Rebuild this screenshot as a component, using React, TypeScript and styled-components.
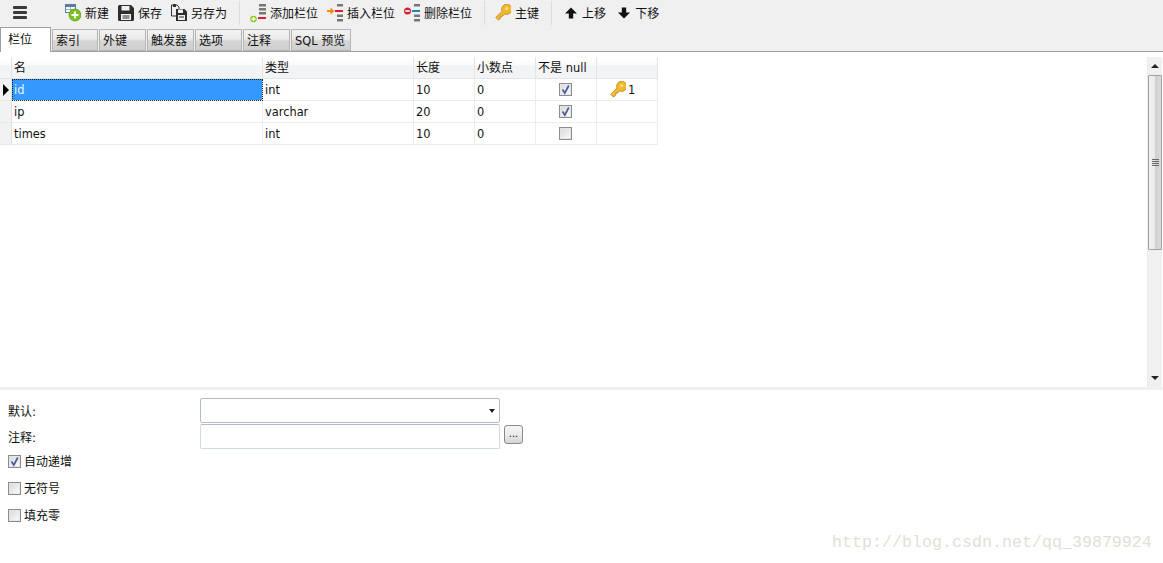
import React from "react";
import styled, { createGlobalStyle } from "styled-components";

const Global = createGlobalStyle`
  html, body { margin: 0; padding: 0; background: #fff; }
  body { font-family: "DejaVu Sans", "Noto Sans CJK SC", sans-serif; font-size: 12px; color: #111; }
`;

const Page = styled.div`
  position: relative;
  width: 1163px;
  height: 563px;
  overflow: hidden;
  display: flex;
  flex-direction: column;
  background: #fff;
`;

const Toolbar = styled.div`
  box-sizing: border-box;
  height: 27px;
  display: flex;
  align-items: center;
  padding: 0 0 2px 13px;
  background: #f0f0f0;
`;

const MenuButton = styled.div`
  width: 14px;
  display: flex;
  flex-direction: column;
  gap: 2px;
  margin-right: 38px;
  span { height: 3px; background: #3a3a3a; border-radius: 1px; }
`;

const ToolButton = styled.div<{ $gap?: number; $after?: number; $before?: number }>`
  display: flex;
  align-items: center;
  gap: ${(p) => p.$gap ?? 4}px;
  margin-left: ${(p) => p.$before ?? 0}px;
  margin-right: ${(p) => p.$after ?? 9}px;
  white-space: nowrap;
  svg { display: block; flex: none; }
`;

const Separator = styled.div`
  width: 1px;
  height: 24px;
  background: #dcdcdc;
  margin-right: 10px;
`;

const TabBar = styled.div`
  height: 25px;
  display: flex;
  align-items: flex-end;
  background: #f0f0f0;
  border-bottom: 1px solid #a0a0a0;
  box-sizing: border-box;
`;

const Tab = styled.div<{ $active?: boolean; $width: number }>`
  box-sizing: border-box;
  width: ${(p) => p.$width}px;
  height: ${(p) => (p.$active ? 25 : 22)}px;
  margin-right: 1px;
  margin-bottom: ${(p) => (p.$active ? -1 : 0)}px;
  padding: ${(p) => (p.$active ? "4px 0 0 7px" : "3px 0 0 3px")};
  border: 1px solid ${(p) => (p.$active ? "#a0a0a0" : "#b4b4b4")};
  border-bottom: ${(p) => (p.$active ? "none" : "1px solid #b4b4b4")};
  background: ${(p) => (p.$active ? "#fff" : "linear-gradient(#f2f2f2 0%, #ebebeb 45%, #d6d6d6 55%, #cfcfcf 100%)")};
  line-height: 16px;
  white-space: nowrap;
  position: relative;
  z-index: ${(p) => (p.$active ? 1 : 0)};
`;

const Latin = styled.span`
  font-size: 11.4px;
`;

const GridArea = styled.div`
  height: 335px;
  display: flex;
  padding-top: 5px;
  box-sizing: border-box;
`;

const TableWrap = styled.div`
  flex: 1;
`;

const Table = styled.div`
  display: grid;
  grid-template-columns: 12px 251px 151px 61px 61px 61px 61px;
  grid-auto-rows: 22px;
  width: 658px;
`;

const HeaderCell = styled.div`
  box-sizing: border-box;
  padding: 2px 0 0 2px;
  line-height: 18px;
  border-right: 1px solid #e4e4e4;
  border-bottom: 1px solid #e4e4e4;
  background: linear-gradient(#fff 0%, #fbfbfb 35%, #f1f3f4 45%, #f3f4f5 100%);
  white-space: nowrap;
`;

const RowHeader = styled.div`
  box-sizing: border-box;
  display: flex;
  align-items: center;
  padding-left: 3px;
  border-right: 1px solid #dedede;
  border-bottom: 1px solid #e8e8e8;
  background: #f2f2f2;
`;

const Pointer = styled.div`
  width: 0;
  height: 0;
  border-left: 6px solid #000;
  border-top: 6px solid transparent;
  border-bottom: 6px solid transparent;
`;

const Cell = styled.div<{ $center?: boolean; $selected?: boolean }>`
  box-sizing: border-box;
  display: flex;
  align-items: center;
  justify-content: ${(p) => (p.$center ? "center" : "flex-start")};
  padding: ${(p) => (p.$center ? "0 1px 0 0" : "0 0 0 2px")};
  gap: 2px;
  border-right: 1px solid #ececec;
  border-bottom: 1px solid #ececec;
  background: #fff;
  font-size: 11.4px;
  ${(p) =>
    p.$selected &&
    `background: #3399ff; color: #eaf4ff; outline: 1px dotted #222; outline-offset: -1px; border-color: #d8e6f2;`}
`;

const KeyCell = styled(Cell)`
  padding-left: 13px;
  gap: 2px;
`;

const CheckBox = styled.div`
  box-sizing: border-box;
  flex: none;
  width: 13px;
  height: 13px;
  border: 1px solid #8c8c8c;
  background: linear-gradient(135deg, #d8d8d8 0%, #eeeeee 60%, #fff 100%);
  box-shadow: inset 0 0 0 1px #e6e6e6;
  display: flex;
  align-items: center;
  justify-content: center;
  svg { display: block; }
`;

const ScrollBar = styled.div`
  box-sizing: border-box;
  width: 16px;
  display: flex;
  flex-direction: column;
  background: #f0f0f0;
  border-left: 1px solid #ebebeb;
  border-right: 1px solid #fff;
`;

const ScrollArrow = styled.div`
  height: 18px;
  display: flex;
  align-items: center;
  justify-content: center;
  flex: none;
`;

const ArrowUp = styled.div`
  border-left: 4px solid transparent;
  border-right: 4px solid transparent;
  border-bottom: 4px solid #222;
`;

const ArrowDown = styled.div<{ $size?: number }>`
  border-left: ${(p) => p.$size ?? 4}px solid transparent;
  border-right: ${(p) => p.$size ?? 4}px solid transparent;
  border-top: 4px solid #222;
`;

const Thumb = styled.div`
  box-sizing: border-box;
  height: 175px;
  flex: none;
  border: 1px solid #a2a2a2;
  border-radius: 1px;
  background: linear-gradient(90deg, #f0f0f0 0%, #ececec 45%, #cfcfcf 55%, #dcdcdc 100%);
  display: flex;
  flex-direction: column;
  justify-content: center;
  align-items: center;
  gap: 1px;
  span { width: 7px; height: 1px; background: #666; }
`;

const Track = styled.div`
  flex: 1;
`;

const Divider = styled.div`
  height: 3px;
  background: #f0f0f0;
  flex: none;
`;

const Form = styled.div`
  padding: 8px 0 0 8px;
  display: grid;
  grid-template-columns: 192px 300px 24px;
  grid-template-rows: 26px 25px;
`;

const FieldLabel = styled.div`
  height: 25px;
  display: flex;
  align-items: center;
`;

const SelectBox = styled.div`
  box-sizing: border-box;
  height: 25px;
  border: 1px solid #b6bcc4;
  border-radius: 2px;
  display: flex;
  align-items: center;
  justify-content: flex-end;
  padding-right: 4px;
`;

const InputBox = styled.div`
  box-sizing: border-box;
  height: 25px;
  border: 1px solid #d3dae4;
  border-top-color: #b6bcc4;
  border-radius: 2px;
`;

const DotsButton = styled.div`
  box-sizing: border-box;
  width: 19px;
  height: 19px;
  margin: 1px 0 0 4px;
  border: 1px solid #8a8a8a;
  border-radius: 3px;
  background: linear-gradient(#f4f4f4 0%, #ececec 50%, #d4d4d4 100%);
  font-size: 10px;
  line-height: 16px;
  text-align: center;
`;

const Options = styled.div`
  padding: 6px 0 0 8px;
  display: flex;
  flex-direction: column;
`;

const OptionRow = styled.div`
  height: 27px;
  display: flex;
  align-items: flex-start;
  gap: 3px;
  line-height: 15px;
`;

const Watermark = styled.div`
  position: absolute;
  left: 832px;
  top: 533px;
  font-family: "Liberation Mono", monospace;
  font-size: 16.67px;
  line-height: 20px;
  color: #dfdfd8;
  white-space: nowrap;
`;

const Key = () => (
  <svg width="16" height="17" viewBox="0 0 16 17">
    <path d="M3.600 16.200L0.800 13.400 7 7.200A5.100 5.100 0 1 1 9.800 10L8.400 11.400 7.200 11.300 7.100 12.500 5.700 12.600 5.600 14.200z" fill="#f3b92c" stroke="#b5851c" strokeWidth="0.8" strokeLinejoin="round" />
    <circle cx="11.600" cy="4.400" r="1.500" fill="#fde38a" />
  </svg>
);

const NewIcon = () => (
  <svg width="16" height="18" viewBox="0 0 16 18">
    <rect x="0.500" y="0.500" width="10" height="8" fill="#fff" stroke="#5a7aa8" />
    <rect x="1" y="1" width="9" height="2" fill="#5a7aa8" />
    <path d="M5.500 3v5M1 5.500h9" stroke="#99aabb" strokeWidth="1" />
    <circle cx="10" cy="11" r="6" fill="#7cc21e" stroke="#5c9e10" strokeWidth="0.8" />
    <path d="M10 7.500v7M6.500 11h7" stroke="#fff" strokeWidth="2" />
  </svg>
);

const SaveIcon = () => (
  <svg width="16" height="16" viewBox="0 0 16 16">
    <path d="M0 1.500A1.500 1.500 0 0 1 1.500 0H13l3 3v11.500a1.500 1.500 0 0 1-1.500 1.500h-13A1.500 1.500 0 0 1 0 14.500z" fill="#2e2e2e" />
    <rect x="3.500" y="1" width="8" height="4.500" fill="#f0f0f0" />
    <rect x="3" y="9" width="10" height="6" fill="#f0f0f0" />
    <rect x="4.500" y="10.500" width="7" height="1" fill="#2e2e2e" />
    <rect x="4.500" y="12.500" width="7" height="1" fill="#2e2e2e" />
  </svg>
);

const SaveAsIcon = () => (
  <svg width="16" height="17" viewBox="0 0 16 17">
    <path d="M0.500 1h5.500l2 2v9H0.500z" fill="#f0f0f0" stroke="#333" />
    <rect x="2" y="0" width="3" height="3" fill="#333" />
    <path d="M5 5h8.500L16 7.500V17H5z" fill="#2e2e2e" />
    <rect x="7" y="5.500" width="5" height="3.500" fill="#f0f0f0" />
    <rect x="7" y="11" width="7" height="5" fill="#f0f0f0" />
    <rect x="8" y="12.500" width="5" height="1" fill="#2e2e2e" />
  </svg>
);

const AddColumnIcon = () => (
  <svg width="16" height="20" viewBox="0 0 16 20">
    <rect x="9" y="1" width="7" height="2.500" fill="#777" />
    <rect x="9" y="5" width="7" height="2.500" fill="#777" />
    <rect x="9" y="9" width="7" height="2.500" fill="#777" />
    <rect x="8" y="14" width="8" height="2" fill="#e0183c" />
    <circle cx="3.500" cy="16" r="3.300" fill="#8ccc24" />
    <path d="M3.500 14v4M1.500 16h4" stroke="#fff" strokeWidth="1.300" />
  </svg>
);

const InsertColumnIcon = () => (
  <svg width="16" height="18" viewBox="0 0 16 18">
    <rect x="10" y="0" width="6" height="2.500" fill="#777" />
    <rect x="8" y="6" width="8" height="2" fill="#e0183c" />
    <rect x="10" y="10.500" width="6" height="2.500" fill="#777" />
    <rect x="10" y="15" width="6" height="2.500" fill="#777" />
    <path d="M0 6h3.500V3.500L7.500 7l-4 3.500V8H0z" fill="#f58a10" />
  </svg>
);

const DeleteColumnIcon = () => (
  <svg width="16" height="18" viewBox="0 0 16 18">
    <rect x="10" y="0" width="6" height="2.500" fill="#777" />
    <rect x="8" y="6" width="8" height="2" fill="#1f86b0" />
    <rect x="10" y="10.500" width="6" height="2.500" fill="#777" />
    <rect x="10" y="15" width="6" height="2.500" fill="#777" />
    <circle cx="3.500" cy="7" r="3.500" fill="#d8203a" />
    <rect x="1.300" y="6.200" width="4.400" height="1.600" fill="#fff" />
  </svg>
);

const UpIcon = () => (
  <svg width="12" height="12" viewBox="0 0 12 12">
    <path d="M6 0.500L12 6.500H8.200V11.500H3.800V6.500H0z" fill="#111" />
  </svg>
);

const DownIcon = () => (
  <svg width="12" height="12" viewBox="0 0 12 12">
    <path d="M6 11.500L12 5.500H8.200V0.500H3.800V5.500H0z" fill="#111" />
  </svg>
);

const Tick = () => (
  <svg width="11" height="11" viewBox="0 0 11 11">
    <path d="M2.500 5.500L4.800 9 8.800 1.500" fill="none" stroke="#4a5c9c" strokeWidth="1.700" />
  </svg>
);

const Check = ({ on }: { on?: boolean }) => <CheckBox>{on && <Tick />}</CheckBox>;

const tabs: [React.ReactNode, number][] = [
  ["索引", 46],
  ["外键", 47],
  ["触发器", 47],
  ["选项", 47],
  ["注释", 47],
  [<><Latin>SQL</Latin> 预览</>, 60],
];

const columns: React.ReactNode[] = ["名", "类型", "长度", "小数点", <>不是 <Latin>null</Latin></>, ""];

const rows = [
  { name: "id", type: "int", len: "10", dec: "0", notNull: true, key: true },
  { name: "ip", type: "varchar", len: "20", dec: "0", notNull: true, key: false },
  { name: "times", type: "int", len: "10", dec: "0", notNull: false, key: false },
];

export default function App() {
  return (
    <Page>
      <Global />
      <Toolbar>
        <MenuButton><span /><span /><span /></MenuButton>
        <ToolButton><NewIcon />新建</ToolButton>
        <ToolButton><SaveIcon />保存</ToolButton>
        <ToolButton $after={12}><SaveAsIcon />另存为</ToolButton>
        <Separator />
        <ToolButton><AddColumnIcon />添加栏位</ToolButton>
        <ToolButton><InsertColumnIcon />插入栏位</ToolButton>
        <ToolButton $after={12}><DeleteColumnIcon />删除栏位</ToolButton>
        <Separator />
        <ToolButton $after={12}><Key />主键</ToolButton>
        <Separator />
        <ToolButton $before={3} $after={12} $gap={5}><UpIcon />上移</ToolButton>
        <ToolButton $after={0} $gap={5}><DownIcon />下移</ToolButton>
      </Toolbar>
      <TabBar>
        <Tab $active $width={51}>栏位</Tab>
        {tabs.map(([label, width], i) => (
          <Tab key={i} $width={width}>{label}</Tab>
        ))}
      </TabBar>
      <GridArea>
        <TableWrap>
          <Table>
            <HeaderCell />
            {columns.map((c, i) => (
              <HeaderCell key={i}>{c}</HeaderCell>
            ))}
            {rows.map((r, i) => (
              <React.Fragment key={r.name}>
                <RowHeader>{i === 0 && <Pointer />}</RowHeader>
                <Cell $selected={i === 0}>{r.name}</Cell>
                <Cell>{r.type}</Cell>
                <Cell>{r.len}</Cell>
                <Cell>{r.dec}</Cell>
                <Cell $center><Check on={r.notNull} /></Cell>
                {r.key ? <KeyCell><Key />1</KeyCell> : <Cell />}
              </React.Fragment>
            ))}
          </Table>
        </TableWrap>
        <ScrollBar>
          <ScrollArrow><ArrowUp /></ScrollArrow>
          <Thumb><span /><span /><span /><span /></Thumb>
          <Track />
          <ScrollArrow><ArrowDown /></ScrollArrow>
        </ScrollBar>
      </GridArea>
      <Divider />
      <Form>
        <FieldLabel>默认:</FieldLabel>
        <SelectBox><ArrowDown $size={3} /></SelectBox>
        <div />
        <FieldLabel>注释:</FieldLabel>
        <InputBox />
        <DotsButton>...</DotsButton>
      </Form>
      <Options>
        <OptionRow><Check on />自动递增</OptionRow>
        <OptionRow><Check />无符号</OptionRow>
        <OptionRow><Check />填充零</OptionRow>
      </Options>
      <Watermark>http://blog.csdn.net/qq_39879924</Watermark>
    </Page>
  );
}
